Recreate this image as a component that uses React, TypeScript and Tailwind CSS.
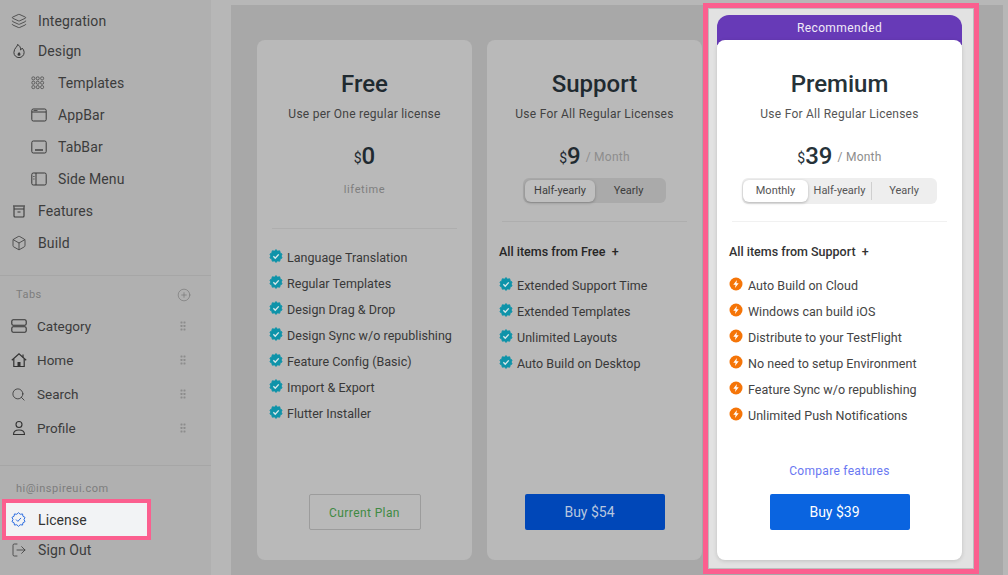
import type { ReactNode } from "react";
import { Box, CirclePlus, Layers, LogOut, Search } from "lucide-react";

function Flame() {
  return (
    <svg viewBox="0 0 16 16" className="h-4 w-4" fill="none" stroke="#3a3a3a" strokeWidth="1">
      <path d="M6.500 1.500c.6 2-3.600 3.400-3.600 8a5 5 0 0 0 10.200 0c0-2-1-3.400-2-4.400-.3 1-.8 1.500-1.600 1.800.4-2.200-.8-4.400-3-5.400Z" />
      <path d="M8.200 9c.2.800 1.300 1.100 1.300 2.300a1.500 1.500 0 0 1-3 0c0-1 1.300-1.400 1.700-2.300Z" fill="#3a3a3a" stroke="none" />
    </svg>
  );
}

function Dots() {
  const cells = [];
  for (let y = 0; y < 3; y++) {
    for (let x = 0; x < 3; x++) {
      cells.push(<rect key={`${x}-${y}`} x={1 + x * 5} y={1 + y * 5} width="3.400" height="3.400" rx="1.400" />);
    }
  }
  return (
    <svg viewBox="0 0 16 16" className="h-[14px] w-[14px]" fill="none" stroke="#4a4a4a" strokeWidth="0.9">
      {cells}
    </svg>
  );
}

function AppBarIcon() {
  return (
    <svg viewBox="0 0 16 14" className="h-[14px] w-4" fill="none" stroke="#3a3a3a" strokeWidth="1">
      <rect x="0.800" y="1" width="14.400" height="12" rx="1.500" />
      <path d="M1 4h14" />
      <path d="M2.500 2.500h4" strokeWidth="0.800" />
    </svg>
  );
}

function TabBarIcon() {
  return (
    <svg viewBox="0 0 16 14" className="h-[14px] w-4" fill="none" stroke="#3a3a3a" strokeWidth="1">
      <rect x="0.800" y="1" width="14.400" height="12" rx="1.500" />
      <path d="M4 10h8" strokeWidth="1.400" />
    </svg>
  );
}

function SideMenuIcon() {
  return (
    <svg viewBox="0 0 16 14" className="h-[14px] w-4" fill="none" stroke="#3a3a3a" strokeWidth="1">
      <rect x="0.800" y="1" width="14.400" height="12" rx="1.500" />
      <path d="M5 1v12" />
      <path d="M2.300 4.500h1.200M2.300 7h1.200" strokeWidth="0.900" />
    </svg>
  );
}

function ArchiveIcon() {
  return (
    <svg viewBox="0 0 16 16" className="h-4 w-4" fill="none" stroke="#3a3a3a" strokeWidth="1.100">
      <path d="M2 3h12" />
      <path d="M3 3.500V13a1 1 0 0 0 1 1h8a1 1 0 0 0 1-1V3.500" />
      <path d="M3 6h10M6.500 9h3" />
    </svg>
  );
}

function CategoryIcon() {
  return (
    <svg viewBox="0 0 16 14" className="h-[14px] w-4" fill="none" stroke="#333333" strokeWidth="1.100">
      <rect x="0.800" y="0.800" width="14.400" height="5.400" rx="1.400" />
      <rect x="0.800" y="7.800" width="14.400" height="5.400" rx="1.400" />
    </svg>
  );
}

function HomeIcon() {
  return (
    <svg viewBox="0 0 16 16" className="h-4 w-4" fill="none" stroke="#333333" strokeWidth="1.200">
      <path d="M.8 8.200 8 1.800l7.200 6.400" />
      <path d="M12 2.500v2.800" />
      <path d="M2.800 7v7.500h10.400V7" />
      <rect x="6.500" y="10" width="3" height="4.500" fill="#333333" stroke="none" />
    </svg>
  );
}

function ProfileIcon() {
  return (
    <svg viewBox="0 0 16 16" className="h-4 w-4" fill="none" stroke="#333333" strokeWidth="1.100">
      <circle cx="8" cy="4.500" r="3" />
      <path d="M2.500 14.500c0-3 2.400-4.500 5.500-4.500s5.500 1.500 5.500 4.500Z" />
    </svg>
  );
}

function Grip() {
  return (
    <svg viewBox="0 0 6 10" className="h-[10px] w-[6px]" fill="#8c8c8c">
      {[0.500, 3.500].map((x) =>
        [0.500, 4, 7.500].map((y) => <rect key={`${x}${y}`} x={x} y={y} width="2" height="2" rx="0.400" />),
      )}
    </svg>
  );
}

// scalloped badge outline, 10 points on a 24 box
function scallop() {
  const pts: string[] = [];
  for (let i = 0; i < 20; i++) {
    const r = i % 2 === 0 ? 11 : 8.800;
    const a = (Math.PI * i) / 10;
    pts.push(`${(12 + r * Math.sin(a)).toFixed(2)} ${(12 - r * Math.cos(a)).toFixed(2)}`);
  }
  return `M${pts.join("L")}Z`;
}

const badgePath = scallop();

function TealCheck() {
  return (
    <svg viewBox="0 0 24 24" className="h-[14px] w-[14px] shrink-0">
      <path d={badgePath} fill="#0e93a9" stroke="#0e93a9" strokeWidth="1.500" strokeLinejoin="round" />
      <path d="m7.500 12.500 3.200 3.200 6-6.500" fill="none" stroke="#d8e8ea" strokeWidth="2.400" />
    </svg>
  );
}

function Bolt() {
  return (
    <svg viewBox="0 0 14 14" className="h-[14px] w-[14px] shrink-0">
      <circle cx="7" cy="7" r="6.500" fill="#f57508" />
      <path d="M7.900 2.900 4.300 7.700h2.300l-.6 3.400 3.700-4.900H7.400Z" fill="#ffffff" />
    </svg>
  );
}

function NavRow({ icon, label, sub }: { icon: ReactNode; label: string; sub?: boolean }) {
  return (
    <div className={`flex items-center ${sub ? "h-8 pl-[31px]" : "h-[30px] pl-[11px]"}`}>
      <span className="flex w-[27px] shrink-0 items-center">{icon}</span>
      <span className="text-sm tracking-[0.1px] text-[#3c3c3c]">{label}</span>
    </div>
  );
}

function TabRow({ icon, label }: { icon: ReactNode; label: string }) {
  return (
    <div className="flex h-[34px] items-center pl-[11px] pr-[25px]">
      <span className="flex w-[26px] shrink-0 items-center">{icon}</span>
      <span className="flex-1 text-[13.500px] text-[#3c3c3c]">{label}</span>
      <Grip />
    </div>
  );
}

function Sidebar() {
  return (
    <aside className="flex w-[211px] shrink-0 flex-col bg-[#b0b0b0] pt-[6px]">
      <NavRow icon={<Layers className="h-4 w-4 text-[#3a3a3a]" strokeWidth={1.200} />} label="Integration" />
      <NavRow icon={<Flame />} label="Design" />
      <div className="h-px" />
      <NavRow sub icon={<Dots />} label="Templates" />
      <NavRow sub icon={<AppBarIcon />} label="AppBar" />
      <NavRow sub icon={<TabBarIcon />} label="TabBar" />
      <NavRow sub icon={<SideMenuIcon />} label="Side Menu" />
      <div className="flex h-8 items-center pl-[11px]">
        <span className="flex w-[27px] items-center">
          <ArchiveIcon />
        </span>
        <span className="text-sm tracking-[0.1px] text-[#3c3c3c]">Features</span>
      </div>
      <div className="flex h-8 items-center pl-[11px]">
        <span className="flex w-[27px] items-center">
          <Box className="h-4 w-4 text-[#3a3a3a]" strokeWidth={1.200} />
        </span>
        <span className="text-sm tracking-[0.1px] text-[#3c3c3c]">Build</span>
      </div>

      <div className="mt-4 border-t border-[#a6a6a6]" />
      <div className="flex h-[33px] items-center justify-between pl-4 pr-5 pt-[5px]">
        <span className="text-[11px] tracking-[0.5px] text-[#7d7d7d]">Tabs</span>
        <CirclePlus className="h-[14px] w-[14px] text-[#7a7a7a]" strokeWidth={1.200} />
      </div>
      <TabRow icon={<CategoryIcon />} label="Category" />
      <TabRow icon={<HomeIcon />} label="Home" />
      <TabRow icon={<Search className="h-[15px] w-[15px] text-[#333333]" strokeWidth={1.300} />} label="Search" />
      <TabRow icon={<ProfileIcon />} label="Profile" />

      <div className="mt-[20px] border-t border-[#a6a6a6]" />
      <div className="flex h-[37px] items-center pl-4 pt-[10px] text-[11px] tracking-[0.5px] text-[#7d7d7d]">
        hi@inspireui.com
      </div>
      <div className="ml-[6px] flex h-[33px] w-[141px] items-center bg-[#f2f3f5] pl-[5px] outline-4 outline-[#fb5f8f]">
        <span className="flex w-[27px] items-center">
          <svg viewBox="0 0 24 24" className="h-[15px] w-[15px]" fill="none" stroke="#2f6fe0" strokeWidth="1.600" strokeLinejoin="round">
            <path d={badgePath} />
            <path d="m8 12 3 3 5-5.500" />
          </svg>
        </span>
        <span className="text-sm tracking-[0.1px] text-[#333333]">License</span>
      </div>
      <div className="-mt-px">
        <NavRow icon={<LogOut className="h-4 w-4 text-[#3a3a3a]" strokeWidth={1.200} />} label="Sign Out" />
      </div>
    </aside>
  );
}

type Plan = {
  name: string;
  sub: string;
  price: string;
  per?: string;
  extra?: string;
  items: string[];
};

function Price({ price, per, dark }: { price: string; per?: string; dark: string }) {
  return (
    <div className="mt-4 flex h-8 items-center justify-center">
      <span className={`mt-[3px] text-sm ${dark}`}>$</span>
      <span className={`text-2xl font-medium ${dark}`}>{price}</span>
      {per && <span className="ml-[5px] mt-[2px] text-xs tracking-[0.25px] text-[#8d8d8d]">/ {per}</span>}
    </div>
  );
}

function Rows({ items }: { items: string[] }) {
  return (
    <ul className="flex flex-col">
      {items.map((t) => (
        <li key={t} className="flex h-[26px] items-center gap-1">
          <span className="-mt-1 flex">
            <TealCheck />
          </span>
          <span className="text-[12.500px] tracking-[0.03px] text-[#383838]">{t}</span>
        </li>
      ))}
    </ul>
  );
}

function FreeCard({ plan }: { plan: Plan }) {
  return (
    <div className="flex h-[520px] w-[215px] flex-col rounded-lg bg-[#b9b9b9] pb-[30px] pt-7">
      <h2 className="text-center text-2xl leading-8 font-medium text-[#1f2a30]">{plan.name}</h2>
      <p className="mt-1 text-center text-xs leading-5 tracking-[0.25px] text-[#424242]">{plan.sub}</p>
      <Price price={plan.price} dark="text-[#1f2a30]" />
      <p className="mt-[10px] text-center text-[11px] leading-4 tracking-[0.6px] text-[#7e7e7e]">{plan.extra}</p>
      <div className="mx-[15px] mt-[30px] border-t border-[#aeaeae]" />
      <div className="mt-4 flex-1 pl-3">
        <Rows items={plan.items} />
      </div>
      <button className="mx-auto h-9 w-28 rounded-[2px] border border-[#9c9c9c] pt-[2px] text-xs tracking-[0.4px] text-[#3f8a43]">
        Current Plan
      </button>
    </div>
  );
}

function SupportCard({ plan }: { plan: Plan }) {
  return (
    <div className="ml-[15px] flex h-[520px] w-[215px] flex-col rounded-lg bg-[#b9b9b9] pb-[30px] pt-7">
      <h2 className="text-center text-2xl leading-8 font-medium text-[#1f2a30]">{plan.name}</h2>
      <p className="mt-1 text-center text-xs leading-5 tracking-[0.25px] text-[#424242]">{plan.sub}</p>
      <Price price={plan.price} per={plan.per} dark="text-[#1f2a30]" />
      <div className="mx-auto mt-[6px] flex h-[25px] w-[143px] items-center rounded-md bg-[#aaaaaa] pl-[2px] text-[11px] text-[#3c3c3c]">
        <span className="flex h-[22px] w-[70px] items-center justify-center rounded-md bg-[#bfbfbf] pt-px shadow-[0_1px_3px_rgba(0,0,0,0.25)]">
          Half-yearly
        </span>
        <span className="flex-1 pr-[4px] pt-[2px] text-center">Yearly</span>
      </div>
      <div className="mx-[15px] mt-[18px] border-t border-[#aeaeae]" />
      <div className="mt-[22px] flex-1 pl-3">
        <p className="mb-[13px] text-[12.500px] leading-4 font-medium text-[#262626]">{plan.extra}&nbsp; +</p>
        <Rows items={plan.items} />
      </div>
      <button className="mx-auto h-9 w-[140px] rounded-[2px] bg-[#0047b8] pr-[10px] text-sm text-[#b7c6df]">
        Buy $54
      </button>
    </div>
  );
}

function PremiumCard({ plan }: { plan: Plan }) {
  return (
    <div className="relative -mt-[2px] ml-px h-[571px] w-[276px] border-[5px] border-[#fb5f8f] bg-[#e2e2e2] pl-[9px] pt-[7px] shadow-[inset_0_0_0_1px_#bdbdbd]">
      <div className="h-[30px] w-[245px] rounded-t-xl bg-[#673ab7] pt-[5px] text-center text-xs tracking-[0.4px] text-[#f0eaf8]">
        Recommended
      </div>
      <div className="-mt-[5px] flex h-[520px] w-[245px] flex-col rounded-lg bg-white pb-[30px] pt-7 shadow-[0_1px_4px_rgba(0,0,0,0.15)]">
        <h2 className="text-center text-2xl leading-8 font-medium text-[#263238]">{plan.name}</h2>
        <p className="mt-1 text-center text-xs leading-5 tracking-[0.25px] text-[#555555]">{plan.sub}</p>
        <Price price={plan.price} per={plan.per} dark="text-[#263238]" />
        <div className="mx-auto mt-[6px] flex h-[26px] w-[195px] items-center rounded-md bg-[#eeeeee] pl-px text-[11px] text-[#555555]">
          <span className="flex h-[22px] w-[65px] items-center justify-center rounded-md bg-white pt-px shadow-[0_1px_3px_rgba(0,0,0,0.25)]">
            Monthly
          </span>
          <span className="w-[64px] border-r border-[#cfcfcf] pt-px text-center">Half-yearly</span>
          <span className="flex-1 pr-px pt-px text-center">Yearly</span>
        </div>
        <div className="mx-[15px] mt-[17px] border-t border-[#f1f1f1]" />
        <div className="mt-[22px] flex-1 pl-3">
          <p className="mb-[13px] text-[12.500px] leading-4 font-medium text-[#333333]">{plan.extra}&nbsp; +</p>
          <ul className="flex flex-col">
            {plan.items.map((t) => (
              <li key={t} className="flex h-[26px] items-center gap-[5px]">
                <span className="-mt-1 flex">
                  <Bolt />
                </span>
                <span className="text-[12.500px] tracking-[0.03px] text-[#444444]">{t}</span>
              </li>
            ))}
          </ul>
        </div>
        <p className="mb-[15px] text-center text-xs leading-4 tracking-[0.3px] text-[#6a78f2]">Compare features</p>
        <button className="mx-auto h-9 w-[140px] rounded-[2px] bg-[#0a64e0] pr-[10px] text-sm text-white">
          Buy $39
        </button>
      </div>
    </div>
  );
}

const free: Plan = {
  name: "Free",
  sub: "Use per One regular license",
  price: "0",
  extra: "lifetime",
  items: [
    "Language Translation",
    "Regular Templates",
    "Design Drag & Drop",
    "Design Sync w/o republishing",
    "Feature Config (Basic)",
    "Import & Export",
    "Flutter Installer",
  ],
};

const support: Plan = {
  name: "Support",
  sub: "Use For All Regular Licenses",
  price: "9",
  per: "Month",
  extra: "All items from Free",
  items: ["Extended Support Time", "Extended Templates", "Unlimited Layouts", "Auto Build on Desktop"],
};

const premium: Plan = {
  name: "Premium",
  sub: "Use For All Regular Licenses",
  price: "39",
  per: "Month",
  extra: "All items from Support",
  items: [
    "Auto Build on Cloud",
    "Windows can build iOS",
    "Distribute to your TestFlight",
    "No need to setup Environment",
    "Feature Sync w/o republishing",
    "Unlimited Push Notifications",
  ],
};

export default function App() {
  return (
    <div className="flex h-[575px] w-[1008px] overflow-hidden font-['Roboto',sans-serif]">
      <Sidebar />
      <main className="flex-1 bg-[#b7b7b7] pl-5 pr-[5px] pt-[5px]">
        <div className="flex h-[570px] bg-[#a8a8a8] pl-[26px]">
          <div className="flex pt-[35px]">
            <FreeCard plan={free} />
            <SupportCard plan={support} />
          </div>
          <PremiumCard plan={premium} />
        </div>
      </main>
    </div>
  );
}
